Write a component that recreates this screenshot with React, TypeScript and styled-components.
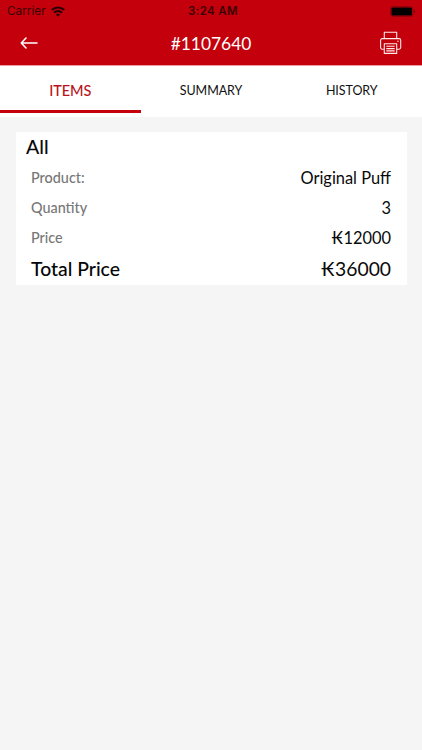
import React from 'react';
import styled, { createGlobalStyle } from 'styled-components';

const Global = createGlobalStyle`
  * { box-sizing: border-box; }
  body { margin: 0; background: #f5f5f5; }
`;

const Screen = styled.div`
  width: 422px;
  height: 750px;
  display: flex;
  flex-direction: column;
  overflow: hidden;
  background: #f5f5f5;
  color: #0a0a0a;
  font-family: Lato, 'Noto Sans', sans-serif;
`;

const Header = styled.header`
  height: 66px;
  flex: none;
  background: #c3000b;
  border-bottom: 1px solid #ee9a9e;
`;

const StatusBar = styled.div`
  height: 22px;
  display: grid;
  grid-template-columns: 1fr auto 1fr;
  align-items: center;
  padding: 0 6px 0 7px;
  color: #3b0003;
  font-family: Inter, sans-serif;
  font-size: 12px;
  line-height: 22px;
`;

const Carrier = styled.div`
  display: flex;
  align-items: center;
  gap: 5px;
  font-size: 11.8px;
`;

const Clock = styled.div`
  font-weight: 600;
  font-size: 11.5px;
  letter-spacing: 0.35px;
  padding-left: 3px;
`;

const Battery = styled.div`
  display: flex;
  justify-content: flex-end;
`;

const NavBar = styled.div`
  height: 42px;
  display: grid;
  grid-template-columns: 1fr auto 1fr;
  align-items: center;
  padding: 0 20px;
`;

const NavButton = styled.button<{ $end?: boolean }>`
  display: flex;
  justify-self: ${(p) => (p.$end ? 'end' : 'start')};
  padding: 0;
  border: 0;
  background: none;
  color: #fff;
`;

const Title = styled.h1`
  margin: 0;
  padding-top: 1px;
  color: #fff;
  font-size: 17.4px;
  font-weight: 400;
  line-height: 24px;
`;

const Tabs = styled.nav`
  height: 51px;
  flex: none;
  display: grid;
  grid-template-columns: repeat(3, 1fr);
  background: #fff;
`;

const Tab = styled.button<{ $active?: boolean }>`
  border: 0;
  border-bottom: 3px solid ${(p) => (p.$active ? '#c3000b' : 'transparent')};
  height: 47px;
  padding: 4px 0 0;
  background: none;
  color: ${(p) => (p.$active ? '#b9121b' : '#111')};
  font-family: inherit;
  font-size: ${(p) => (p.$active ? '14.5px' : '12.5px')};
  letter-spacing: -0.08px;
  font-weight: ${(p) => (p.$active ? 500 : 400)};
`;

const Card = styled.section`
  margin: 15px 15.5px 0;
  height: 153px;
  padding: 0 15.5px;
  background: #fff;
`;

const CardTitle = styled.h2`
  margin: 0 0 0 -5px;
  font-size: 19.5px;
  font-weight: 500;
  line-height: 30px;
`;

const Row = styled.div<{ $total?: boolean }>`
  height: ${(p) => (p.$total ? '33px' : '30px')};
  display: flex;
  align-items: center;
  justify-content: space-between;
  font-size: ${(p) => (p.$total ? '19.3px' : '16.4px')};
`;

const Label = styled.span<{ $total?: boolean }>`
  color: ${(p) => (p.$total ? '#050505' : '#777')};
  font-size: ${(p) => (p.$total ? '19.4px' : '14.4px')};
  font-weight: 500;
`;

const Value = styled.span``;

const WifiIcon = () => (
  <svg width="14" height="11" viewBox="0 0 14 11" fill="none" stroke="#260002" strokeWidth="2.1">
    <path d="M.8 4.1C4.4.7 9.6.7 13.2 4.1M3 6.7c2.3-2.1 5.7-2.1 8 0" />
    <path d="M4.9 8.5c1.2-1.1 3-1.1 4.2 0L7 10.7z" fill="#260002" stroke="none" />
  </svg>
);

const BatteryIcon = () => (
  <svg width="26" height="11" viewBox="0 0 26 11">
    <rect x=".5" y=".5" width="22.5" height="10" rx="2.5" fill="none" stroke="#8c0008" strokeWidth=".8" />
    <rect x="1.5" y="1.5" width="20.5" height="8" rx="1" fill="#000" />
    <path d="M24 3.6c1.6.6 1.6 3.2 0 3.8z" fill="#7a0007" />
  </svg>
);

const BackIcon = () => (
  <svg width="18" height="12" viewBox="0 0 18 12" fill="none" stroke="#fff" strokeWidth="1.6" strokeLinecap="round" strokeLinejoin="round">
    <path d="M17 6H1.5M6 1 1.3 6 6 11" />
  </svg>
);

const PrinterIcon = () => (
  <svg width="22" height="24" viewBox="0 0 22 24" fill="none" stroke="#ffe9e9" strokeWidth="1.1" strokeLinejoin="round">
    <path d="M4.3 7.5V1.2h12.4v6.3M4.3 18.2H1.9A1.6 1.6 0 0 1 .6 16.6V9.2a1.6 1.6 0 0 1 1.6-1.6h16.9a1.6 1.6 0 0 1 1.6 1.6v7.4a1.6 1.6 0 0 1-1.6 1.6h-2.4" />
    <path d="M4.3 12.8h12.4v9.6H4.3zM6.3 15.3h8.4M6.3 17.6h8.4M6.3 19.9h8.4M17.2 10.3h1.5" />
  </svg>
);

const rows = [
  { label: 'Product:', value: 'Original Puff' },
  { label: 'Quantity', value: '3' },
  { label: 'Price', value: '₭12000' },
  { label: 'Total Price', value: '₭36000', total: true },
];

export default function App() {
  return (
    <Screen>
      <Global />
      <Header>
        <StatusBar>
          <Carrier>Carrier <WifiIcon /></Carrier>
          <Clock>3:24 AM</Clock>
          <Battery><BatteryIcon /></Battery>
        </StatusBar>
        <NavBar>
          <NavButton aria-label="Back"><BackIcon /></NavButton>
          <Title>#1107640</Title>
          <NavButton $end aria-label="Print"><PrinterIcon /></NavButton>
        </NavBar>
      </Header>
      <Tabs>
        <Tab $active>ITEMS</Tab>
        <Tab>SUMMARY</Tab>
        <Tab>HISTORY</Tab>
      </Tabs>
      <Card>
        <CardTitle>All</CardTitle>
        {rows.map((r) => (
          <Row key={r.label} $total={r.total}>
            <Label $total={r.total}>{r.label}</Label>
            <Value>{r.value}</Value>
          </Row>
        ))}
      </Card>
    </Screen>
  );
}
